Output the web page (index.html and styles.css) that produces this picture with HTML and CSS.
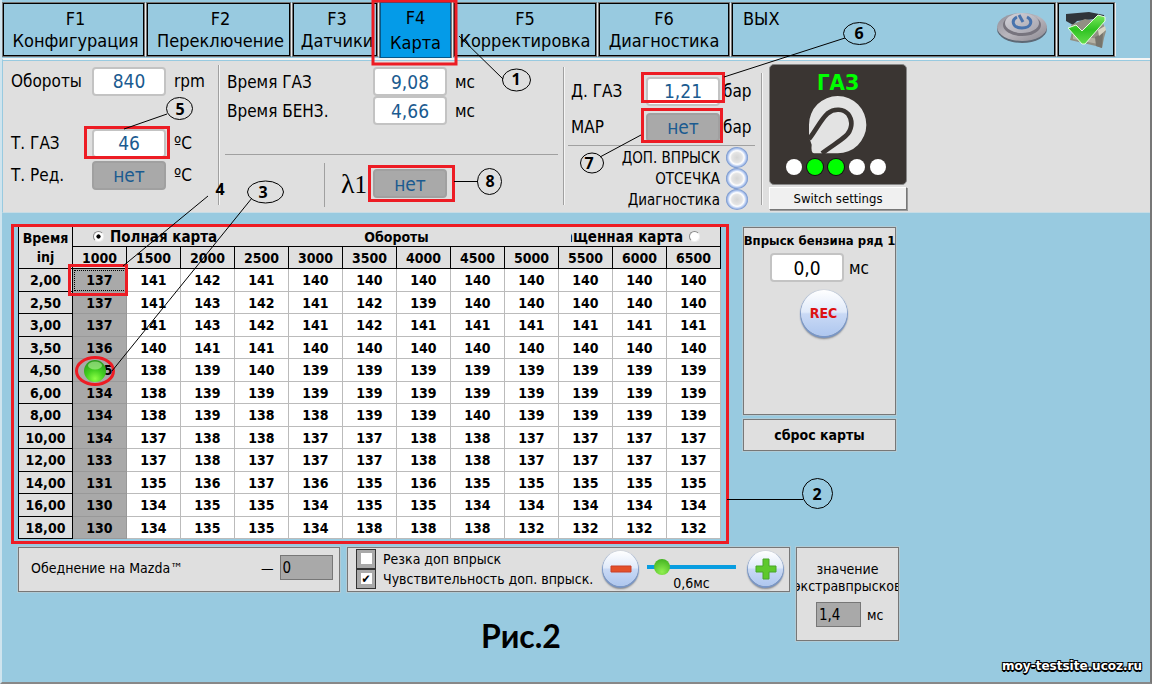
FILE: index.html
```html
<!DOCTYPE html>
<html lang="ru">
<head>
<meta charset="utf-8">
<title>Карта</title>
<link rel="stylesheet" href="styles.css">
</head>
<body>
<div class="window">
  <nav class="tabs">
    <button class="tab tab-config">F1<br>Конфигурация</button>
    <button class="tab tab-switch">F2<br>Переключение</button>
    <button class="tab tab-sensors">F3<br>Датчики</button>
    <button class="tab tab-map active">F4<br>Карта</button>
    <button class="tab tab-correct">F5<br>Корректировка</button>
    <button class="tab tab-diag">F6<br>Диагностика</button>
    <button class="tab tab-exit"><span>ВЫХ</span>
      <svg class="power" width="54" height="38" viewBox="0 0 54 36" aria-hidden="true">
        <defs>
          <linearGradient id="metal" x1="0" y1="0" x2="1" y2="1"><stop offset="0" stop-color="#8d8d98"/><stop offset=".5" stop-color="#b9b6bd"/><stop offset="1" stop-color="#8b8890"/></linearGradient>
          <linearGradient id="cap" x1="0" y1="0" x2="1" y2="1"><stop offset="0" stop-color="#d4d3da"/><stop offset="1" stop-color="#a5a3ac"/></linearGradient>
        </defs>
        <ellipse cx="27" cy="20" rx="25" ry="14" fill="#5d6875"/>
        <ellipse cx="27" cy="18" rx="25" ry="14" fill="url(#metal)"/>
        <ellipse cx="27" cy="16" rx="19" ry="11" fill="#77747e"/>
        <ellipse cx="27" cy="14" rx="17" ry="10" fill="url(#cap)"/>
        <path d="M22 8C16 11 17 19 27 19C37 19 38 11 32 8" fill="none" stroke="#4873ad" stroke-width="3"/>
        <path d="M24 6L28 13" stroke="#4873ad" stroke-width="3"/>
      </svg>
    </button>
    <button class="tab tab-link" aria-label="Соединение">
      <svg width="42" height="38" viewBox="0 0 42 38" aria-hidden="true">
        <defs><linearGradient id="tick" x1="0" y1="0" x2="0" y2="1"><stop offset="0" stop-color="#7be85c"/><stop offset=".5" stop-color="#2fc322"/><stop offset="1" stop-color="#64dc4c"/></linearGradient></defs>
        <path d="M1 3L24 1L39 4L40 11L30 8L12 10L8 14L1 10Z" fill="#30353a"/>
        <path d="M6 14L20 8L38 12L41 20L39 27L37 37L31 35L5 29L7 21Z" fill="#918f83"/>
        <path d="M8 24L34 28L33 33L8 28Z" fill="#b5b2a4"/>
        <path d="M30 26L38 22L37 37L31 35Z" fill="#77756c"/>
        <path d="M33 19L40 15L41 19L34 25Z" fill="#d8d5c4"/>
        <path d="M3 17L11 14L17 20L33 4L40 6L40 10L20 33H17Z" fill="url(#tick)" stroke="#e6ffe0"/>
      </svg>
    </button>
  </nav>

  <section class="panel">
    <div class="group engine">
      <div class="row"><label for="rpm">Обороты</label><input class="value" id="rpm" value="840"><span>rpm</span></div>
      <div class="row spaced"><label for="tgas">Т. ГАЗ</label><input class="value" id="tgas" value="46"><span>ºC</span></div>
      <div class="row"><label for="tred">Т. Ред.</label><input class="value off" id="tred" value="нет"><span>ºC</span></div>
    </div>
    <div class="group times">
      <div class="row"><label for="timegas">Время ГАЗ</label><input class="value" id="timegas" value="9,08"><span>мс</span></div>
      <div class="row"><label for="timepet">Время БЕНЗ.</label><input class="value" id="timepet" value="4,66"><span>мс</span></div>
      <div class="lambda"><label for="lambda"><i>λ</i>1</label><input class="value off" id="lambda" value="нет"></div>
    </div>
    <div class="group pressure">
      <div class="row"><label for="pgas">Д. ГАЗ</label><input class="value" id="pgas" value="1,21"><span>бар</span></div>
      <div class="row"><label for="pmap">МАР</label><input class="value off" id="pmap" value="нет"><span>бар</span></div>
      <ul class="lamps">
        <li>ДОП. ВПРЫСК<span class="lamp"></span></li>
        <li>ОТСЕЧКА<span class="lamp"></span></li>
        <li>Диагностика<span class="lamp"></span></li>
      </ul>
    </div>
    <div class="fuel">
      <div class="fuel-display">
        <strong>ГАЗ</strong>
        <svg width="60" height="60" viewBox="170 286 180 180" aria-hidden="true">
          <path d="M173 412V375A86 86 0 1 1 258 461H188Q178 459 181 435Z" fill="#e3e3e3"/>
          <path d="M173 418C195 390 208 360 228 342C250 324 277 328 291 344C306 364 302 392 282 410C263 427 243 437 212 461" fill="none" stroke="#3a3532" stroke-width="14"/>
        </svg>
        <div class="level"><span></span><span class="on"></span><span class="on"></span><span></span><span></span></div>
      </div>
      <button class="switch">Switch settings</button>
    </div>
  </section>

  <main class="work">
    <div class="upper">
      <table class="map">
        <thead>
          <tr class="map-title">
            <th rowspan="2" class="corner">Время<br>inj</th>
            <th colspan="12">
              <div class="modes">
                <label><input type="radio" name="mode" checked>Полная карта</label>
                <span>Обороты</span>
                <label class="short"><span class="cut">Сокращенная карта</span><input type="radio" name="mode"></label>
              </div>
            </th>
          </tr>
          <tr class="speeds"><th>1000</th><th>1500</th><th>2000</th><th>2500</th><th>3000</th><th>3500</th><th>4000</th><th>4500</th><th>5000</th><th>5500</th><th>6000</th><th>6500</th></tr>
        </thead>
        <tbody>
          <tr><th>2,00</th><td class="focus">137</td><td>141</td><td>142</td><td>141</td><td>140</td><td>140</td><td>140</td><td>140</td><td>140</td><td>140</td><td>140</td><td>140</td></tr>
          <tr><th>2,50</th><td>137</td><td>141</td><td>143</td><td>142</td><td>141</td><td>142</td><td>139</td><td>140</td><td>140</td><td>140</td><td>140</td><td>140</td></tr>
          <tr><th>3,00</th><td>137</td><td>141</td><td>143</td><td>142</td><td>141</td><td>142</td><td>141</td><td>141</td><td>141</td><td>141</td><td>141</td><td>141</td></tr>
          <tr><th>3,50</th><td>136</td><td>140</td><td>141</td><td>141</td><td>140</td><td>140</td><td>140</td><td>140</td><td>140</td><td>140</td><td>140</td><td>140</td></tr>
          <tr><th>4,50</th><td>135</td><td>138</td><td>139</td><td>140</td><td>139</td><td>139</td><td>139</td><td>139</td><td>139</td><td>139</td><td>139</td><td>139</td></tr>
          <tr><th>6,00</th><td>134</td><td>138</td><td>139</td><td>139</td><td>139</td><td>139</td><td>139</td><td>139</td><td>139</td><td>139</td><td>139</td><td>139</td></tr>
          <tr><th>8,00</th><td>134</td><td>138</td><td>139</td><td>138</td><td>138</td><td>139</td><td>139</td><td>140</td><td>139</td><td>139</td><td>139</td><td>139</td></tr>
          <tr><th>10,00</th><td>134</td><td>137</td><td>138</td><td>138</td><td>137</td><td>137</td><td>138</td><td>138</td><td>137</td><td>137</td><td>137</td><td>137</td></tr>
          <tr><th>12,00</th><td>133</td><td>137</td><td>138</td><td>137</td><td>137</td><td>137</td><td>138</td><td>138</td><td>137</td><td>137</td><td>137</td><td>137</td></tr>
          <tr><th>14,00</th><td>131</td><td>135</td><td>136</td><td>137</td><td>136</td><td>135</td><td>136</td><td>135</td><td>135</td><td>135</td><td>135</td><td>135</td></tr>
          <tr><th>16,00</th><td>130</td><td>134</td><td>135</td><td>135</td><td>134</td><td>135</td><td>135</td><td>134</td><td>134</td><td>134</td><td>134</td><td>134</td></tr>
          <tr><th>18,00</th><td>130</td><td>134</td><td>135</td><td>135</td><td>134</td><td>138</td><td>138</td><td>138</td><td>132</td><td>132</td><td>132</td><td>132</td></tr>
        </tbody>
      </table>
      <aside class="side">
        <div class="box injection">
          <label for="inj">Впрыск бензина ряд 1</label>
          <div class="inj-row"><input class="value dark" id="inj" value="0,0"><span>мс</span></div>
          <button class="round rec">REC</button>
        </div>
        <button class="box reset">сброс карты</button>
      </aside>
    </div>

    <div class="lower">
      <div class="box mazda">
        <label for="lean">Обеднение на Mazda™</label><span>—</span><input class="gray" id="lean" value="0">
      </div>
      <div class="box extra">
        <div class="checks">
          <label><input type="checkbox">Резка доп впрыск</label>
          <label><input type="checkbox" checked>Чувствительность доп. впрыск.</label>
        </div>
        <button class="round" aria-label="Меньше"><svg width="22" height="22" viewBox="0 0 22 22"><path d="M1 8H21V14H1Z" fill="#e4512b" stroke="#c9412a"/></svg></button>
        <div class="slider">
          <input type="range" min="0" max="100" value="10" aria-label="Чувствительность" id="sens">
          <output for="sens">0,6мс</output>
        </div>
        <button class="round" aria-label="Больше"><svg width="22" height="22" viewBox="0 0 22 22"><path d="M8 1H14V8H21V14H14V21H8V14H1V8H8Z" fill="#5ec92c" stroke="#49a52b"/></svg></button>
      </div>
      <div class="box pulses">
        <label for="pulse"><span>значение</span><span>экстравпрысков</span></label>
        <div class="pulse-row"><input class="gray" id="pulse" value="1,4"><span>мс</span></div>
      </div>
    </div>
    <div class="caption">Рис.2</div>
  </main>
  <div class="site">moy-testsite.ucoz.ru</div>

  <svg class="callouts" width="1152" height="684" viewBox="0 0 1152 684">
    <defs><radialGradient id="ball" cx=".5" cy=".85" r=".8"><stop offset="0" stop-color="#8dff45"/><stop offset=".5" stop-color="#42cf20"/><stop offset="1" stop-color="#2b9c1c"/></radialGradient></defs>
    <g fill="none" stroke="#ed1c24" stroke-width="3">
      <path d="M373 0V64H456V0"/>
      <path d="M373 1H456"/>
      <rect x="85.500" y="127.500" width="83" height="30"/>
      <rect x="642.500" y="73.500" width="81" height="28"/>
      <rect x="642.500" y="109.500" width="79" height="32"/>
      <rect x="369.500" y="166.500" width="84" height="34"/>
      <rect x="12.500" y="225.500" width="715" height="317"/>
      <rect x="69.500" y="265.500" width="57" height="29"/>
    </g>
    <circle cx="95" cy="371" r="11" fill="url(#ball)"/>
    <ellipse cx="95" cy="365.500" rx="7" ry="4" fill="#b6f09d" opacity=".6"/>
    <ellipse cx="95" cy="371" rx="18.500" ry="13.500" fill="none" stroke="#ed1c24" stroke-width="3"/>
    <g fill="none" stroke="#000">
      <path d="M459 36L503 79M167 114L124 129M208 196L123 266M252 198L112 371M845 38L724 77M641 135L600 157M454 181.500H478M727 499.500H803"/>
      <ellipse cx="516.500" cy="80" rx="14" ry="11"/>
      <ellipse cx="817.500" cy="493.500" rx="15" ry="15"/>
      <ellipse cx="265.500" cy="192" rx="18" ry="11"/>
      <ellipse cx="179.500" cy="108.500" rx="13" ry="11"/>
      <ellipse cx="859.500" cy="33.500" rx="16" ry="11"/>
      <ellipse cx="592" cy="163" rx="11.500" ry="10"/>
      <ellipse cx="489.500" cy="181.500" rx="12" ry="13"/>
    </g>
    <g class="marks">
      <text x="516" y="85">1</text><text x="817" y="500">2</text><text x="263" y="198">3</text><text x="220" y="195">4</text>
      <text x="180" y="115">5</text><text x="859" y="39">6</text><text x="589" y="169">7</text><text x="490" y="187">8</text>
    </g>
  </svg>
</div>
</body>
</html>
```
FILE: styles.css
```css
* { box-sizing: border-box; }
body { margin: 0; background: #98cae0; color: #000; font-family: "DejaVu Sans Condensed", "Noto Sans", sans-serif; font-size: 17px; }
button, input { font: inherit; color: inherit; margin: 0; }
.window { position: relative; display: flex; flex-direction: column; min-height: 100vh; border-right: 2px solid #777; border-bottom: 2px solid #888; border-left: 2px solid #cfe4ee; overflow: hidden; }

.tabs { display: flex; gap: 3px; padding: 3px 0 2px 1px; height: 58px; }
.tab { height: 53px; padding: 0 0 0 4px; background: #98cae0; border: 1px solid #000; box-shadow: 0 0 0 1px #777, 2px 0 0 #eee; font-size: 18px; line-height: 22px; white-space: nowrap; overflow: hidden; }
.tab-config { width: 141px; }
.tab-switch { width: 143px; }
.tab-sensors { width: 84px; }
.tab-map { width: 71px; }
.tab-correct { width: 142px; padding: 0; }
.tab-diag { width: 130px; padding: 0; }
.tab-exit { display: flex; justify-content: space-between; width: 323px; padding: 4px 5px 0 10px; }
.tab-link { display: flex; align-items: center; justify-content: center; width: 56px; padding: 0; }
.tab.active { height: 56px; margin-top: -1px; padding: 0; background: #049be8; line-height: 25px; border-color: #05588a; }

.panel { display: flex; height: 155px; padding: 4px 0 0 8px; background: #dfdfdf; border-top: 2px solid #f5f5f5; border-bottom: 1px solid #c7dce5; border-left: 1px solid #98cae0; box-shadow: inset 0 1px 0 #98cae0; }
.group { border-right: 1px solid #a0a0a0; margin: 4px 0 7px; box-shadow: 1px 0 0 #f5f5f5; }
.row { display: flex; align-items: center; white-space: nowrap; }
.value { width: 74px; height: 29px; padding: 0; text-align: center; color: #1b5b90; font-size: 19px; background: #fff; border: 2px solid #c3c3c3; border-radius: 4px; }
.value.off { background: #a9a9a9; border-color: #a0a0a0; }
.value.dark { color: #000; }
.engine { width: 208px; margin-top: 1px; }
.engine .row { height: 32px; }
.engine .spaced { margin-top: 30px; }
.engine label { width: 81px; }
.engine .row span { padding-left: 8px; }
.times { width: 345px; margin-top: 3px; }
.times .row { height: 29px; padding-left: 8px; }
.times .row label { width: 146px; }
.times .row span { padding-left: 8px; }
.lambda { display: flex; align-items: center; height: 58px; margin: 29px 5px 0 6px; padding-left: 116px; border-top: 1px solid #a0a0a0; background: linear-gradient(#a0a0a0, #a0a0a0) 99px 8px / 1px 44px no-repeat; }
.lambda label { width: 32px; font-family: "Liberation Serif", serif; font-size: 25px; white-space: nowrap; }
.lambda i { font-size: 28px; font-style: normal; }
.pressure { width: 198px; margin-top: 9px; }
.pressure .row { height: 36px; padding-left: 7px; }
.pressure .row label { width: 75px; }
.pressure .row span { padding-left: 3px; }
.lamps { margin: 0 6px 0 4px; padding: 1px 7px 0 0; list-style: none; border-top: 1px solid #a0a0a0; font-size: 15px; }
.lamps li { display: flex; align-items: center; justify-content: flex-end; gap: 6px; height: 21px; }
.lamp { width: 22px; height: 21px; border-radius: 50%; background: radial-gradient(#d5d5d5 0, #e4e4e4 34%, #fff 46%, #b9cdf2 58%, #7393cc 70%); }
.fuel { width: 138px; margin-left: 7px; }
.fuel-display { display: flex; flex-direction: column; align-items: center; height: 121px; padding-top: 5px; background: #3a3532; border: 1px solid #888; border-radius: 5px; }
.fuel-display strong { color: #0f0; font-size: 22px; line-height: 25px; }
.fuel-display svg { flex: none; }
.level { display: flex; gap: 5px; align-items: center; margin-top: 4px; padding-right: 4px; }
.level span { width: 16px; height: 16px; border-radius: 50%; background: #fff; }
.level .on { background: #0f0; box-shadow: 0 0 0 1px #111; }
.switch { display: block; width: 100%; height: 23px; margin-top: 2px; padding: 0; font-size: 13px; background: #f0f0f0; border: 1px solid; border-color: #fff #777 #777 #fff; box-shadow: 1px 1px 0 #999; }

.work { padding: 14px 16px 0; }
.upper { display: flex; gap: 22px; }
.map { width: 703px; flex: none; table-layout: fixed; border-collapse: separate; border-spacing: 0; background: #fff; font-size: 14px; font-weight: bold; text-align: center; }
.map th, .map td { padding: 0; line-height: 20px; }
.map th { background: #dfdfdf; border-right: 1px solid #000; border-bottom: 1px solid #000; }
.map td { border-right: 1px solid #bbb; border-bottom: 1px solid #bbb; }
.map tr > :first-child:not([colspan]) { border-left: 1px solid #000; }
.map .corner { width: 55px; line-height: 19px; }
.map .speeds th:first-child { border-left: 0; }
.map-title { height: 20px; }
.speeds { height: 22px; }
.map tbody tr { height: 22px; }
.map tbody tr:nth-child(odd) { height: 23px; }
.map td:nth-child(2) { background: #a9a9a9; border-color: #999; }
.map td.focus { outline: 1px dotted #000; outline-offset: -2px; }
.modes { display: flex; align-items: center; justify-content: space-between; height: 18px; padding: 0 20px; }
.modes label { display: flex; align-items: center; gap: 6px; width: 132px; white-space: nowrap; font-size: 15px; }
.modes .short { justify-content: flex-end; }
.cut { display: flex; justify-content: flex-end; width: 112px; overflow: hidden; }
.modes input { appearance: none; flex: none; width: 11px; height: 11px; border: 1px solid #888; border-right-color: #eee; border-bottom-color: #eee; border-radius: 50%; background: #fff; }
.modes input:checked { background: radial-gradient(#000 0 28%, #fff 38%); }

.side { display: flex; flex-direction: column; gap: 4px; width: 153px; }
.box { background: #dfdfdf; border: 1px solid #777; box-shadow: 0 0 0 1px #b0cbd6; }
.injection { display: flex; flex-direction: column; align-items: center; height: 188px; padding-top: 4px; }
.injection > label { font-size: 13px; font-weight: bold; line-height: 18px; white-space: nowrap; }
.inj-row { display: flex; align-items: center; gap: 5px; margin: 3px 0 8px; }
.reset { height: 32px; padding: 0; font-size: 14px; font-weight: bold; }
.round { display: flex; flex: none; align-items: center; justify-content: center; width: 35px; height: 35px; padding: 0; border: 0; border-radius: 50%; background: linear-gradient(#fff, #e0eafa 48%, #c9d9f5 52%, #aec7ef); box-shadow: 0 1px 1px 1px #7897c9, 0 3px 2px #888; }
.rec { width: 46px; height: 46px; margin-left: 8px; color: #dd1212; font-size: 14px; font-weight: bold; }

.lower { display: flex; align-items: flex-start; gap: 7px; height: 94px; margin-top: 8px; font-size: 14px; }
.mazda { display: flex; align-items: center; width: 322px; height: 45px; padding: 0 6px 4px 12px; }
.mazda label { width: 230px; }
.mazda input { margin-left: 6px; }
.gray { width: 53px; height: 25px; padding: 0 2px; background: #a9a9a9; border: 1px solid #777; font-size: 15px; }
.extra { display: flex; align-items: center; width: 443px; height: 45px; padding: 0 6px 2px 8px; }
.checks { width: 250px; }
.checks label { display: flex; align-items: center; gap: 7px; height: 20px; white-space: nowrap; }
.checks input { appearance: none; display: grid; place-items: center; width: 20px; height: 20px; background: linear-gradient(#fff, #fff) center / 11px 11px no-repeat #a9a9a9; border: 1px solid #333; }
.checks input:checked::after { content: "✔"; font-size: 12px; line-height: 12px; }
.slider { width: 90px; height: 42px; margin: 0 12px 0 9px; text-align: center; line-height: 16px; }
.slider input { appearance: none; display: block; width: 100%; height: 16px; margin: 11px 0 0; background: linear-gradient(#089de0, #089de0) center / 100% 4px no-repeat; }
.slider input::-webkit-slider-thumb { appearance: none; width: 16px; height: 16px; border-radius: 50%; background: radial-gradient(circle at 50% 80%, #91f050, #35a818); }
.pulses { width: 103px; height: 94px; margin-left: -1px; padding-top: 13px; overflow: hidden; }
.pulses label { display: flex; flex-direction: column; align-items: center; line-height: 17px; }
.pulse-row { display: flex; align-items: center; gap: 6px; margin: 7px 0 0 19px; }
.pulses .gray { width: 45px; }
.caption { width: 1006px; margin-top: -25px; text-align: center; font: 700 32px/40px Lato, "Noto Sans", sans-serif; }
.site { margin: auto 8px 8px auto; color: #fff; font: bold 12px/16px "DejaVu Sans", sans-serif; text-shadow: -1px -1px #000, 1px -1px #000, -1px 1px #000, 1px 1px #000, 0 2px #000; }
.callouts { position: absolute; top: 0; left: -2px; pointer-events: none; }
.marks { font: bold 16px "Noto Sans", sans-serif; text-anchor: middle; }
```
